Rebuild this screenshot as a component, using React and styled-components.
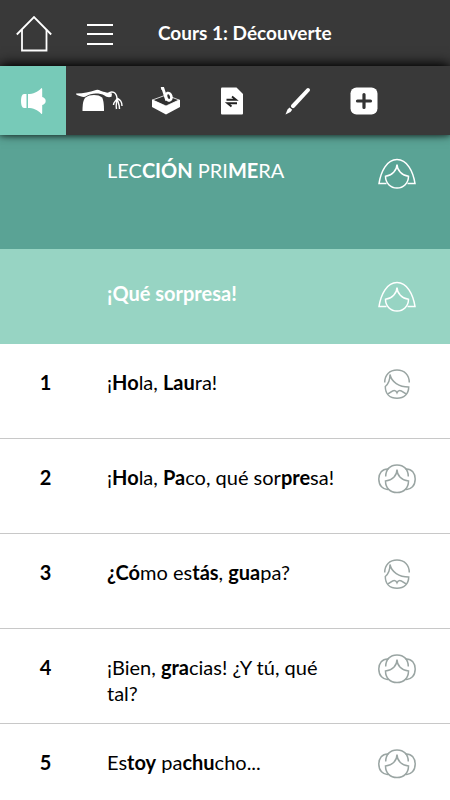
import React, { useState } from 'react'
import styled, { createGlobalStyle } from 'styled-components'

const GlobalStyle = createGlobalStyle`
  * {
    box-sizing: border-box;
  }
  body {
    margin: 0;
    background-color: #fff;
    color: #000;
    font-family: Lato, "Noto Sans", sans-serif;
    font-size: 20px;
    line-height: 26px;
  }
`

const Header = styled.header`
  display: flex;
  align-items: center;
  height: 66px;
  padding-left: 12px;
  background-color: #393939;
  color: #fff;
`

const HeaderButton = styled.button`
  display: flex;
  align-items: center;
  justify-content: center;
  width: 44px;
  height: 66px;
  margin-right: 22px;
  padding: 0;
  border: none;
  background-color: transparent;
  cursor: pointer;
`

const Title = styled.h1`
  margin: 0 0 0 14px;
  font-size: 19px;
  font-weight: 700;
`

const Toolbar = styled.nav`
  position: relative;
  display: flex;
  height: 69px;
  background-color: #393939;
  box-shadow: 0 -3px 12px -1px #000, 0 1px 6px rgba(0, 0, 0, 0.5);
`

const Tool = styled.button`
  display: flex;
  align-items: center;
  justify-content: center;
  width: 66px;
  padding: 0 0 0 2px;
  border: none;
  background-color: ${({ $active }) => ($active ? '#77cab8' : 'transparent')};
  cursor: pointer;
`

const Lesson = styled.main`
  display: flex;
  flex-direction: column;
`

const Banner = styled.div`
  display: flex;
  justify-content: space-between;
  min-height: ${({ $main }) => ($main ? '114px' : '95px')};
  padding: ${({ $main }) => ($main ? '22px' : '31px')} 34px 0 107px;
  background-color: ${({ $main }) => ($main ? '#5aa395' : '#97d4c3')};
  color: #fff;
`

const BannerText = styled.h2`
  margin: 0;
  font-size: 20px;
  font-weight: ${({ $bold }) => ($bold ? 700 : 400)};
`

const Lines = styled.ol`
  margin: 0;
  padding: 0;
  list-style: none;
`

const Line = styled.li`
  display: flex;
  min-height: 95px;
  padding: 25px 34px 0 0;
  border-bottom: 1px solid #c8c8c8;
`

const Number = styled.span`
  width: 91px;
  margin-right: 16px;
  flex-shrink: 0;
  text-align: center;
  font-weight: 700;
`

const Sentence = styled.p`
  flex: 1;
  margin: 0;
  padding-right: 34px;
`

const Avatar = styled.svg`
  flex-shrink: 0;
  width: 38px;
  height: 32px;
  fill: none;
  stroke: ${({ $light }) => ($light ? '#fff' : '#9aa5a3')};
  stroke-width: 1.5;
`

const Narrator = () => (
  <Avatar $light viewBox="0 0 38 32" aria-hidden="true">
    <path d="M8.500 26.500H1C3 14 9 2.500 19 2.500S35 14 37 26.500h-7.500" />
    <path d="M19 7.500C19 13 14 18.500 7.500 19.300 7.500 26 12.500 31 19 31S30.500 26 30.500 19.300C24 18.500 19 13 19 7.500z" />
  </Avatar>
)

const Man = () => (
  <Avatar viewBox="0 0 38 32" aria-hidden="true">
    <path d="M6.700 13.500C6.700 6 11.500 1 19 1s12.300 5 12.300 12.500" />
    <path d="M12 5.500c0 6-1 9-4.700 12C7.300 25 12 29.200 19 29.200S30.700 25 30.700 18C21 18 13.500 13 12 5.500z" />
    <path d="M9.300 25c2.200 0 4.200-3.500 7-3.500 1.300 0 2.200 1 2.700 2.200.500-1.200 1.400-2.200 2.700-2.200 2.800 0 4.800 3.500 7 3.500" />
  </Avatar>
)

const Woman = () => (
  <Avatar viewBox="0 0 38 32" aria-hidden="true">
    <path d="M7.700 12.500C7.700 5.500 12 1 19 1s11.300 4.500 11.300 11.500" />
    <path d="M19 5.500c0 6-4.500 11-11.500 11.500C7.500 24 12 28.500 19 28.500S30.500 24 30.500 17C23.500 16.500 19 11.500 19 5.500z" />
    <path d="M10.500 5C4 4.500.800 9.500.800 15c0 6.500 4 11 9.700 10.300" />
    <path d="M27.500 5c6.500-.500 9.700 4.500 9.700 10 0 6.500-4 11-9.700 10.300" />
  </Avatar>
)

const tools = [
  {
    label: 'Écouter',
    icon: (
      <svg width="26" height="28" viewBox="0 0 26 28" fill="#fff">
        <path d="M5.500 7v14H3C1 21 0 18 0 14s1-7 3-7z" />
        <path d="M7 7C12 7 17 5 20 1.500q1.200-1.500 1.200 1V10c2 .500 3.500 2 3.500 4s-1.500 3.500-3.500 4v7.500q0 2.500-1.200 1C17 23 12 21 7 21z" />
      </svg>
    ),
  },
  {
    label: 'Leçon',
    icon: (
      <svg width="50" height="24" viewBox="0 0 50 24" fill="#fff">
        <path d="M1.500 4.500C9 4.500 14 3 21 1q1.500-.400 3 .100C28 3 31 3.600 37 4.500l-.500 3.300c-3 .800-5 .200-7-1.300-5-3-14-2.500-18 .500-2 1.500-4 1-6 .200C3 6.500-.500 5.500 1.500 4.500z" />
        <path d="M10.500 8.500c4-3.300 13-3.300 16.500 0 1.700 2.500 2 8 2 13.500H7.500c0-5 .300-11 3-13.500z" />
        <path d="M33 4.500c4-3 8.500-1.500 9 5M42 9.500c-1 3-3.500 3-3.500 6.500M42 9c0 5-1.500 6-.500 11M42 9c1 5 2.500 6 2.500 11M42 9c3 2 5 3 5 8" fill="none" stroke="#fff" strokeWidth="1.400" />
      </svg>
    ),
  },
  {
    label: 'Exercices',
    icon: (
      <svg width="30" height="28" viewBox="0 0 30 28">
        <path d="M1.500 13L15 8l13 5-13 6z" fill="#303030" stroke="#fff" strokeWidth=".800" />
        <path d="M1 12.500l14 6.500 14-6.500V20L15 27.500 1 20z" fill="#fff" />
        <path d="M10 1.300l1.800-.300 4 12.500" fill="none" stroke="#fff" strokeWidth="2.800" />
        <ellipse cx="17.700" cy="9.700" rx="2.600" ry="3.800" transform="rotate(-18 17.700 9.700)" fill="#303030" stroke="#fff" strokeWidth="2.700" />
      </svg>
    ),
  },
  {
    label: 'Traduction',
    icon: (
      <svg width="22" height="28" viewBox="0 0 22 28">
        <path d="M1 .500h14.500L22 7v19.500q0 1-1 1H1q-1 0-1-1v-25q0-1 1-1z" fill="#fff" />
        <path d="M5.500 12.700H15l-4-3.200M16 16.300H6.500l4 3.200" fill="none" stroke="#222" strokeWidth="1.900" />
      </svg>
    ),
  },
  {
    label: 'Écrire',
    icon: (
      <svg width="26" height="28" viewBox="0 0 26 28" fill="#fff">
        <path d="M21.800 1.500q1.200-1 2.500 0t.400 2.500L9.500 20.500q-1.200 1.200-2.700.200t-.600-2.700z" />
        <path d="M4.500 20.500l2.700 2.300-1.700 2.200L.500 27.500 2.500 22.500z" />
      </svg>
    ),
  },
  {
    label: 'Plus',
    icon: (
      <svg width="28" height="28" viewBox="0 0 28 28">
        <rect x=".500" y=".500" width="27" height="27" rx="6" fill="#fff" />
        <path d="M14 7.500v13M7.500 14h13" stroke="#333" strokeWidth="3.200" strokeLinecap="round" />
      </svg>
    ),
  },
]

const lines = [
  { id: 1, who: Man, text: <>¡<b>Ho</b>la, <b>Lau</b>ra!</> },
  { id: 2, who: Woman, text: <>¡<b>Ho</b>la, <b>Pa</b>co, qué sor<b>pre</b>sa!</> },
  { id: 3, who: Man, text: <><b>¿Có</b>mo es<b>tás</b>, <b>gua</b>pa?</> },
  { id: 4, who: Woman, text: <>¡Bien, <b>gra</b>cias! ¿Y tú, qué tal?</> },
  { id: 5, who: Woman, text: <>Es<b>toy</b> pa<b>chu</b>cho...</> },
]

const App = () => {
  const [active, setActive] = useState(0)

  return (
    <>
      <GlobalStyle />
      <Header>
        <HeaderButton aria-label="Accueil">
          <svg width="36" height="38" viewBox="0 0 36 38" fill="none" stroke="#fff" strokeWidth="1.800">
            <path d="M.800 20.500L18 3l17.200 17.500" />
            <path d="M6 15.500V36.500h24.500V15.500" />
          </svg>
        </HeaderButton>
        <HeaderButton aria-label="Menu">
          <svg width="26" height="24" viewBox="0 0 26 24" stroke="#fff" strokeWidth="2">
            <path d="M0 4h26M0 13h26M0 23h26" />
          </svg>
        </HeaderButton>
        <Title>Cours 1: Découverte</Title>
      </Header>
      <Toolbar>
        {tools.map((tool, i) => (
          <Tool key={tool.label} aria-label={tool.label} $active={i === active} onClick={() => setActive(i)}>
            {tool.icon}
          </Tool>
        ))}
      </Toolbar>
      <Lesson>
        <Banner $main>
          <BannerText>LEC<b>CIÓN</b> PRI<b>ME</b>RA</BannerText>
          <Narrator />
        </Banner>
        <Banner>
          <BannerText $bold>¡Qué sorpresa!</BannerText>
          <Narrator />
        </Banner>
        <Lines>
          {lines.map(({ id, who: Who, text }) => (
            <Line key={id}>
              <Number>{id}</Number>
              <Sentence>{text}</Sentence>
              <Who />
            </Line>
          ))}
        </Lines>
      </Lesson>
    </>
  )
}

export default App
